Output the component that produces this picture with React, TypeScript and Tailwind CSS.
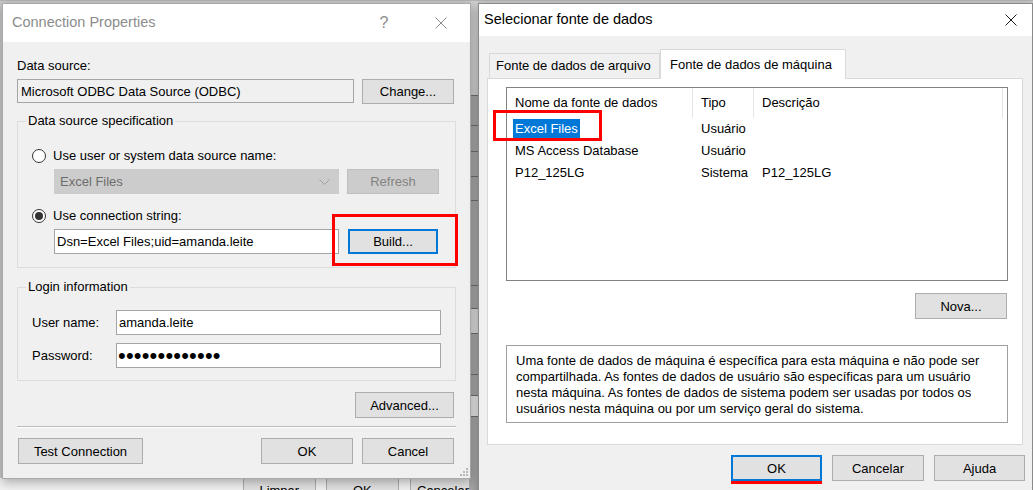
import type { ReactNode } from "react";

type BtnProps = {
  children: ReactNode;
  className?: string;
  focused?: boolean;
  disabled?: boolean;
};

const Btn = ({ children, className = "", focused, disabled }: BtnProps) => {
  const look = disabled
    ? "border border-[#bfbfbf] bg-[#cccccc] text-[#838383]"
    : focused
      ? "border-2 border-[#0078d7] bg-[#e1e1e1] text-black"
      : "border border-[#adadad] bg-[#e1e1e1] text-black";
  return (
    <button
      type="button"
      className={`flex shrink-0 items-center justify-center leading-none ${look} ${className}`}
    >
      {children}
    </button>
  );
};

const CloseIcon = ({ color }: { color: string }) => (
  <svg width="12" height="12" viewBox="0 0 12 12">
    <path d="M0.5 0.5 L11.5 11.5 M11.5 0.5 L0.5 11.5" stroke={color} strokeWidth="1" />
  </svg>
);

const Radio = ({ checked, label }: { checked?: boolean; label: string }) => (
  <div className="ml-[14px] flex h-[16px] items-center">
    <span className="flex h-[14px] w-[14px] items-center justify-center rounded-full border border-[#333333] bg-white">
      {checked && <span className="h-[8px] w-[8px] rounded-full bg-[#333333]" />}
    </span>
    <span className="ml-[7px] leading-[16px]">{label}</span>
  </div>
);

const ResizeGrip = () => (
  <svg width="8" height="8" viewBox="0 0 8 8" className="absolute right-[2px] bottom-[2px]">
    <rect x="6" y="0" width="2" height="2" fill="#b8b8b8" />
    <rect x="3" y="3" width="2" height="2" fill="#b8b8b8" />
    <rect x="6" y="3" width="2" height="2" fill="#b8b8b8" />
    <rect x="0" y="6" width="2" height="2" fill="#b8b8b8" />
    <rect x="3" y="6" width="2" height="2" fill="#b8b8b8" />
    <rect x="6" y="6" width="2" height="2" fill="#b8b8b8" />
  </svg>
);

const ConnectionProperties = () => (
  <div className="absolute top-[3px] left-[2px] flex h-[476px] w-[469px] flex-col border border-[#aaaaaa] bg-[#f0f0f0] shadow-[0_3px_10px_rgba(0,0,0,0.3)]">
    <div className="flex h-[38px] shrink-0 items-center bg-white pr-[6px] pl-[9px]">
      <span className="text-[14.5px] text-[#8c8c8c]">Connection Properties</span>
      <span className="ml-auto w-[46px] text-center text-[16px] text-[#8c8c8c]">?</span>
      <span className="ml-[11px] flex w-[46px] justify-center">
        <CloseIcon color="#8c8c8c" />
      </span>
    </div>

    <div className="flex flex-col px-[14px]">
      <div className="mt-[16px] leading-[16px]">Data source:</div>
      <div className="mt-[5px] flex items-start">
        <input
          readOnly
          value="Microsoft ODBC Data Source (ODBC)"
          className="h-[24px] w-[337px] border border-[#a5a5a5] bg-[#f0f0f0] px-[3px] text-black outline-none"
        />
        <Btn className="ml-[8px] h-[25px] w-[92px]">Change...</Btn>
      </div>

      <fieldset className="mt-[9px] h-[155px] w-[439px] border border-[#dcdcdc]">
        <legend className="ml-[8px] px-[2px] leading-[16px]">Data source specification</legend>
        <div className="mt-[19px]">
          <Radio label="Use user or system data source name:" />
        </div>
        <div className="mt-[5px] ml-[36px] flex">
          <div className="flex h-[25px] w-[285px] items-center justify-between border border-[#cccccc] bg-[#cccccc] pr-[8px] pl-[5px] text-[#6d6d6d]">
            <span>Excel Files</span>
            <svg width="11" height="6" viewBox="0 0 11 6">
              <path d="M0.5 0.5 L5.5 5.5 L10.5 0.5" stroke="#a0a0a0" fill="none" />
            </svg>
          </div>
          <Btn disabled className="ml-[8px] h-[25px] w-[92px]">
            Refresh
          </Btn>
        </div>
        <div className="mt-[14px]">
          <Radio checked label="Use connection string:" />
        </div>
        <div className="mt-[5px] ml-[36px] flex">
          <input
            readOnly
            value="Dsn=Excel Files;uid=amanda.leite"
            className="h-[25px] w-[285px] border border-[#a5a5a5] bg-white px-[2px] text-black outline-none"
          />
          <Btn focused className="ml-[9px] h-[25px] w-[90px]">
            Build...
          </Btn>
        </div>
      </fieldset>

      <fieldset className="mt-[11px] h-[102px] w-[439px] border border-[#dcdcdc]">
        <legend className="ml-[8px] px-[2px] leading-[16px]">Login information</legend>
        <div className="mt-[15px] ml-[14px] flex items-center">
          <span className="w-[84px]">User name:</span>
          <input
            readOnly
            value="amanda.leite"
            className="h-[25px] w-[325px] border border-[#a5a5a5] bg-white px-[2px] text-black outline-none"
          />
        </div>
        <div className="mt-[8px] ml-[14px] flex items-center">
          <span className="w-[84px]">Password:</span>
          <input
            readOnly
            type="password"
            value="amandaleite12"
            className="h-[25px] w-[325px] border border-[#a5a5a5] bg-white px-[1px] text-[22px] tracking-[0.2px] text-black outline-none"
          />
        </div>
      </fieldset>

      <Btn className="mt-[11px] mr-[2px] h-[26px] w-[99px] self-end">Advanced...</Btn>

      <div className="mt-[8px] h-px w-[439px] bg-[#bcbcbc]" />
      <div className="h-px w-[439px] bg-white" />

      <div className="mt-[10px] flex">
        <Btn className="ml-[1px] h-[26px] w-[125px]">Test Connection</Btn>
        <Btn className="ml-auto h-[26px] w-[92px]">OK</Btn>
        <Btn className="mr-[2px] ml-[9px] h-[26px] w-[92px]">Cancel</Btn>
      </div>
    </div>

    <ResizeGrip />
    {/* highlight drawn around the Build button */}
    <div className="absolute top-[210px] left-[329px] h-[52px] w-[126px] border-[3px] border-[#ff0000]" />
  </div>
);

const sources = [
  { name: "Excel Files", tipo: "Usuário", desc: "", selected: true },
  { name: "MS Access Database", tipo: "Usuário", desc: "" },
  { name: "P12_125LG", tipo: "Sistema", desc: "P12_125LG" },
];

const SelectDataSource = () => (
  <div className="absolute top-[3px] left-[478px] flex h-[500px] w-[555px] flex-col border border-[#8a8a8a] bg-[#f0f0f0] shadow-[0_3px_10px_rgba(0,0,0,0.3)]">
    <div className="flex h-[32px] shrink-0 items-center bg-white pr-[11px] pl-[5px]">
      <span className="text-[14.5px] text-black">Selecionar fonte de dados</span>
      <span className="ml-auto flex w-[20px] justify-center">
        <CloseIcon color="#1a1a1a" />
      </span>
    </div>

    <div className="flex flex-col px-[8px]">
      <div className="mt-[13px] flex h-[29px] items-end pl-[2px]">
        <div className="flex h-[25px] w-[171px] items-center border border-b-0 border-[#d9d9d9] bg-[#f0f0f0] pl-[6px]">
          Fonte de dados de arquivo
        </div>
        <div className="relative z-10 -mb-px flex h-[30px] w-[186px] items-center border border-b-0 border-[#d9d9d9] bg-white pl-[9px]">
          Fonte de dados de máquina
        </div>
      </div>

      <div className="flex h-[367px] w-[536px] flex-col border border-[#d9d9d9] bg-white">
        <div className="mt-[8px] ml-[18px] h-[194px] w-[502px] border border-[#828282]">
          <div className="flex h-[30px]">
            <div className="flex w-[186px] items-center border-r border-[#e5e5e5] pl-[8px]">
              Nome da fonte de dados
            </div>
            <div className="flex w-[61px] items-center border-r border-[#e5e5e5] pl-[8px]">Tipo</div>
            <div className="flex w-[249px] items-center border-r border-[#e5e5e5] pl-[8px]">Descrição</div>
          </div>
          {sources.map((s) => (
            <div key={s.name} className="flex h-[22px] items-center">
              <div className="w-[186px] pl-[6px]">
                <span className={s.selected ? "bg-[#0078d7] px-[2px] py-[2px] text-white" : "px-[2px]"}>
                  {s.name}
                </span>
              </div>
              <div className="w-[61px] pl-[8px]">{s.tipo}</div>
              <div className="w-[249px] pl-[8px]">{s.desc}</div>
            </div>
          ))}
        </div>

        <Btn className="mt-[12px] mr-[15px] h-[26px] w-[92px] self-end">Nova...</Btn>

        <div className="mt-[26px] ml-[18px] h-[78px] w-[502px] border border-[#a0a0a0] pt-[7px] pl-[9px] leading-[16px] whitespace-nowrap">
          Uma fonte de dados de máquina é específica para esta máquina e não pode ser
          <br />
          compartilhada. As fontes de dados de usuário são específicas para um usuário
          <br />
          nesta máquina. As fontes de dados de sistema podem ser usadas por todos os
          <br />
          usuários nesta máquina ou por um serviço geral do sistema.
        </div>
      </div>

      <div className="mt-[10px] -mr-[1px] flex justify-end gap-[10px]">
        <div className="flex flex-col">
          <Btn focused className="h-[26px] w-[91px]">
            OK
          </Btn>
          <div className="h-[3px] w-[91px] bg-[#ff0000]" />
        </div>
        <Btn className="h-[26px] w-[92px]">Cancelar</Btn>
        <Btn className="h-[26px] w-[91px]">Ajuda</Btn>
      </div>
    </div>

    {/* highlight drawn around the selected entry */}
    <div className="absolute top-[106px] left-[14px] h-[31px] w-[109px] border-[3px] border-[#ff0000]" />
  </div>
);

// the spreadsheet window that sits behind both dialogs
const Backdrop = () => (
  <div className="flex h-[490px] w-[1033px] flex-col bg-[#e6e6e6]">
    <div className="h-[3px] border-b border-[#b5b5b5] bg-[#dedede]" />
    <div className="flex flex-1">
      <div className="flex w-[470px] flex-col">
        <div className="h-[477px] bg-[#c9c9c9]" />
        <div className="flex h-[20px] bg-[#f0f0f0]">
          <div className="ml-[243px] flex h-[25px] w-[91px] justify-center border border-[#adadad] bg-[#e1e1e1] pt-[2px]">
            Limpar
          </div>
          <div className="ml-[10px] flex h-[25px] w-[92px] justify-center border border-[#adadad] bg-[#e1e1e1] pt-[2px]">
            OK
          </div>
          <div className="ml-[11px] flex h-[25px] w-[60px] border border-[#adadad] bg-[#e1e1e1] pt-[2px] pl-[6px]">
            Cancelar
          </div>
        </div>
      </div>
      <div className="flex w-[8px] flex-col bg-[#a8a8a8]">
        <div className="h-[94px] bg-[#d2d2d2]" />
        <div className="h-px bg-[#707070]" />
        <div className="h-[29px]" />
        <div className="h-px bg-[#707070]" />
        <div className="h-[25px]" />
        <div className="h-px bg-[#707070]" />
        <div className="h-[24px]" />
        <div className="h-px bg-[#707070]" />
        <div className="h-[23px]" />
        <div className="h-px bg-[#707070]" />
        <div className="h-[84px]" />
        <div className="h-px bg-[#707070]" />
        <div className="h-[22px]" />
        <div className="h-[26px] border-y border-[#707070] bg-[#dcdcdc]" />
        <div className="h-[40px]" />
        <div className="h-px bg-[#707070]" />
        <div className="h-[20px]" />
        <div className="h-px bg-[#707070]" />
        <div className="h-[20px] bg-[#e8e8e8]" />
        <div className="h-px bg-[#707070]" />
      </div>
      <div className="flex-1 bg-[#c9c9c9]" />
    </div>
  </div>
);

const App = () => (
  <div className="relative h-[490px] w-[1033px] overflow-hidden font-['Liberation_Sans',Arial,sans-serif] text-[13px] text-black">
    <Backdrop />
    <ConnectionProperties />
    <SelectDataSource />
  </div>
);

export default App;
